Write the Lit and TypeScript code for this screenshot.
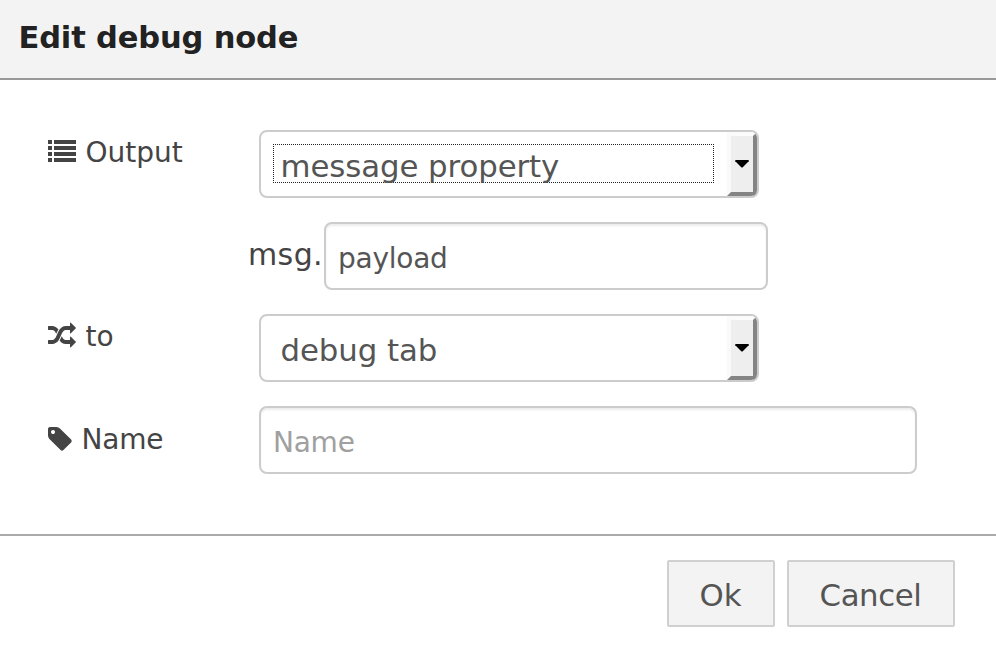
import { LitElement, html, css, svg } from "lit";
import { customElement, property } from "lit/decorators.js";

@customElement("select-box")
class SelectBox extends LitElement {
  @property() value = "";
  @property({ type: Boolean }) focused = false;

  static styles = css`
    :host { display: block; width: 500px; }
    .box {
      box-sizing: border-box; display: flex; height: 68px;
      border: 2px solid #ccc; border-radius: 8px; background: #fff; overflow: hidden;
      font: 30.8px/32px "DejaVu Sans", Verdana, sans-serif; letter-spacing: -0.08px; color: #555;
    }
    .text {
      box-sizing: border-box; width: 441px; height: 39px; margin: 12px 13px 0 12px;
      border: 1px solid transparent; padding: 5px 0 0 6.5px; white-space: nowrap;
    }
    .focused { border: 1px dotted #222; }
    .drop {
      box-sizing: border-box; width: 30px; height: 64px; flex: none;
      background: #eee; border: 4px solid; border-color: #fbfbfb #848484 #848484 #f9f9f9;
      display: flex; justify-content: center; padding-top: 24px;
    }
    svg { display: block; flex: none; }
  `;

  render() {
    return html`<div class="box">
      <div class="text ${this.focused ? "focused" : ""}">${this.value}</div>
      <div class="drop"><svg width="14" height="8" viewBox="0 0 14 8"><path d="M0.3 0H13.700V1.200L7.500 7.500H6.500L0.300 1.200Z" fill="#000"/></svg></div>
    </div>`;
  }
}

const listIcon = svg`<path d="M0 0h4v4H0zM6 0h22v4H6zM0 6h4v4H0zM6 6h22v4H6zM0 12h4v4H0zM6 12h22v4H6zM0 18h4v4H0zM6 18h22v4H6z"/>`;
const shuffleIcon = svg`<path d="M666 481q-60 92-137 273-22-45-37-72.500t-40.500-63.500-51-56.500-63-35-81.500-14.500h-224q-14 0-23-9t-9-23v-192q0-14 9-23t23-9h224q250 0 410 225zm1126 799q0 14-9 23l-320 320q-9 9-23 9-13 0-22.500-9.500t-9.500-22.500v-192q-32 0-85 .5t-81 1-73-1-71-5-64-10.500-63-18.500-58-28.500-59-40-55-53.500-56-69.500q59-93 136-273 22 45 37 72.500t40.500 63.500 51 56.500 63 35 81.500 14.500h256v-192q0-14 9-23t23-9q12 0 24 10l319 319q9 9 9 23zm0-896q0 14-9 23l-320 320q-9 9-23 9-13 0-22.500-9.500t-9.500-22.500v-192h-256q-48 0-87 15t-69 45-51 61.500-45 77.500q-32 62-78 171-29 66-49.500 111t-54 105-64 100-74 83-90 68.500-106.500 42-128 16.500h-224q-14 0-23-9t-9-23v-192q0-14 9-23t23-9h224q48 0 87-15t69-45 51-61.500 45-77.500q32-62 78-171 29-66 49.500-111t54-105 64-100 74-83 90-68.500 106.500-42 128-16.500h256v-192q0-14 9-23t23-9q12 0 24 10l319 319q9 9 9 23z"/>`;
const tagIcon = svg`<path d="M576 448q0-53-37.500-90.500t-90.500-37.500-90.500 37.500-37.500 90.500 37.500 90.500 90.500 37.500 90.500-37.500 37.500-90.500zm1067 576q0 53-37 90l-491 492q-39 37-91 37-53 0-90-37l-715-716q-38-37-64.500-101t-26.500-117v-416q0-52 38-90t90-38h416q53 0 117 26.500t102 64.500l715 714q37 39 37 91z"/>`;

@customElement("app-root")
class AppRoot extends LitElement {
  static styles = css`
    :host {
      display: block; height: 654px; background: #fff; color: #444;
      font: 28px/28px "DejaVu Sans", Verdana, sans-serif;
    }
    .dialog { display: flex; flex-direction: column; height: 654px; overflow: hidden; }
    .header {
      box-sizing: border-box; height: 80px; padding: 22px 0 0 18.5px;
      background: #f3f3f3; border-bottom: 2px solid #999; color: #222;
      font-size: 30.5px; line-height: 32px; font-weight: bold; letter-spacing: -0.15px;
    }
    .form {
      box-sizing: border-box; height: 454px; padding: 50px 0 0 48px;
      display: flex; flex-direction: column; gap: 24px;
    }
    .row { display: flex; height: 68px; }
    .label { box-sizing: border-box; width: 211px; flex: none; display: flex; padding-top: 8px; gap: 9.5px; }
    .label span { padding-top: 1px; }
    .low { padding-top: 19px; gap: 9.5px; letter-spacing: -0.2px; }
    .label svg { display: block; flex: none; fill: #444; }
    .list { margin-top: 2px; }
    .tag { margin-top: 2px; }
    .prefix { box-sizing: border-box; width: 76px; margin-left: 200px; padding-top: 17px; font-size: 30px; line-height: 32px; letter-spacing: 0.4px; flex: none; }
    .input {
      box-sizing: border-box; height: 68px; margin: 0; padding: 20px 12px 16px;
      border: 2px solid #ccc; border-radius: 8px; outline: none; background: #fff;
      box-shadow: inset 0 2px 2px rgba(0, 0, 0, 0.075);
      font: inherit; letter-spacing: -0.25px; color: #555;
    }
    .input::placeholder { color: #a0a0a0; opacity: 1; }
    .short { width: 444px; }
    .long { width: 658px; }
    .footer {
      box-sizing: border-box; height: 120px; border-top: 2px solid #aaa;
      padding: 24px 41px 0 0; display: flex; justify-content: flex-end; gap: 12px;
    }
    .button {
      box-sizing: border-box; height: 67px; margin: 0; padding: 17px 0 14px;
      border: 2px solid #d0d0d0; border-radius: 2px; background: #f3f3f3; color: #555;
      font: 30.8px/32px "DejaVu Sans", Verdana, sans-serif; text-align: center;
    }
    .ok { width: 108px; padding-right: 1px; }
    .cancel { width: 168px; padding-right: 1px; letter-spacing: -0.4px; }
  `;

  render() {
    return html`<div class="dialog">
      <div class="header">Edit debug node</div>
      <div class="form">
        <div class="row">
          <div class="label"><svg class="list" width="28" height="22" viewBox="0 0 28 22">${listIcon}</svg><span>Output</span></div>
          <select-box value="message property" focused></select-box>
        </div>
        <div class="row">
          <div class="prefix">msg.</div>
          <input class="input short" .value=${"payload"} />
        </div>
        <div class="row">
          <div class="label"><svg width="28" height="28" viewBox="0 0 1792 1792">${shuffleIcon}</svg><span>to</span></div>
          <select-box value="debug tab"></select-box>
        </div>
        <div class="row">
          <div class="label low"><svg class="tag" width="24" height="24" viewBox="128 128 1536 1536">${tagIcon}</svg><span>Name</span></div>
          <input class="input long" placeholder="Name" />
        </div>
      </div>
      <div class="footer">
        <button class="button ok">Ok</button>
        <button class="button cancel">Cancel</button>
      </div>
    </div>`;
  }
}
